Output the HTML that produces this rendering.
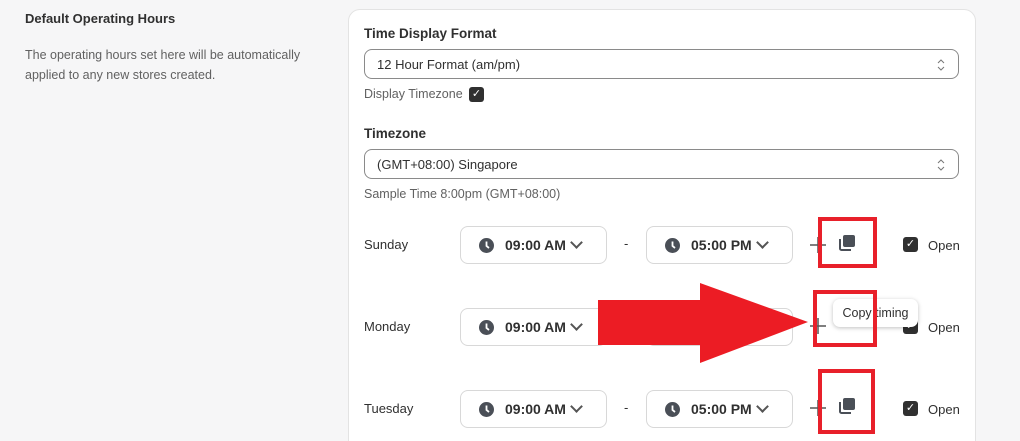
<!DOCTYPE html>
<html style="height:441px;overflow:hidden"><head><style>
body{margin:0;width:1020px;height:441px;background:#f6f6f7;font-family:"Liberation Sans",sans-serif;position:relative;overflow:hidden;color:#303030}
.a{position:absolute}
.card{left:348px;top:9px;width:626px;height:450px;background:#fff;border:1px solid #e3e3e3;border-radius:12px}
.sel{border:1px solid #8a8a8a;border-radius:8px;height:30px;left:364px;width:595px;font-size:13px;line-height:30px;padding-left:12px;box-sizing:border-box;color:#303030}
.tb{border:1px solid #d8d8d8;border-radius:8px;height:38px;width:147px;box-sizing:border-box;font-size:14px;font-weight:bold;line-height:36px;color:#303030}
.tb svg{position:absolute;left:18px;top:11px}
.tb .t{position:absolute;left:44px}
.tb .v{position:absolute;right:25px;top:11px;width:7px;height:7px;border-right:2px solid #555;border-bottom:2px solid #555;transform:rotate(45deg)}
.day{font-size:13px;left:364px}
.cb{width:15px;height:15px;background:#303030;border-radius:3px;color:#fff;font-size:11px;line-height:15px;text-align:center}
.red{border:4px solid #e8202a;box-sizing:border-box}
</style></head><body>
<div class="a" style="left:25px;top:11px;font-size:13px;font-weight:bold">Default Operating Hours</div>
<div class="a" style="left:25px;top:45px;font-size:12.5px;line-height:20px;color:#616161;width:300px">The operating hours set here will be automatically applied to any new stores created.</div>
<div class="a card"></div>
<div class="a" style="left:364px;top:26px;font-size:13.5px;font-weight:bold">Time Display Format</div>
<div class="a sel" style="top:49px">12 Hour Format (am/pm)<svg class="a" style="right:12px;top:8px" width="10" height="14"><path d="M2 5l3-3 3 3M2 9l3 3 3-3" stroke="#777" fill="none"/></svg></div>
<div class="a" style="left:364px;top:87px;font-size:12.5px;color:#616161">Display Timezone</div>
<div class="a cb" style="left:469px;top:87px">✓</div>
<div class="a" style="left:364px;top:126px;font-size:13.5px;font-weight:bold">Timezone</div>
<div class="a sel" style="top:149px">(GMT+08:00) Singapore<svg class="a" style="right:12px;top:8px" width="10" height="14"><path d="M2 5l3-3 3 3M2 9l3 3 3-3" stroke="#777" fill="none"/></svg></div>
<div class="a" style="left:364px;top:187px;font-size:12.5px;color:#616161">Sample Time 8:00pm (GMT+08:00)</div>

<!-- rows -->
<div class="a day" style="top:237px">Sunday</div>
<div class="a tb" style="left:460px;top:226px"><svg width="15" height="15"><circle cx="7.5" cy="7.5" r="7.5" fill="#4a4f57"/><path d="M7.5 3.5v4.5l2.5 2" stroke="#fff" stroke-width="1.8" fill="none"/></svg><span class="t">09:00 AM</span><span class="v"></span></div>
<div class="a" style="left:624px;top:236px;font-size:13px">-</div>
<div class="a tb" style="left:646px;top:226px"><svg width="15" height="15"><circle cx="7.5" cy="7.5" r="7.5" fill="#4a4f57"/><path d="M7.5 3.5v4.5l2.5 2" stroke="#fff" stroke-width="1.8" fill="none"/></svg><span class="t">05:00 PM</span><span class="v"></span></div>
<svg class="a" style="left:810px;top:236px" width="18" height="18"><path d="M0 9h16M8 1v16" stroke="#555" stroke-width="1.5"/></svg>
<svg class="a" style="left:838px;top:234px" width="18" height="18"><rect x="5" y="1" width="12" height="12" rx="2" fill="#4a4f57"/><path d="M2 5v9.5a1.5 1.5 0 0 0 1.5 1.5h9.5" stroke="#4a4f57" stroke-width="2" fill="none"/></svg>
<div class="a cb" style="left:903px;top:237px">✓</div>
<div class="a" style="left:928px;top:238px;font-size:13px">Open</div>

<div class="a day" style="top:319px">Monday</div>
<div class="a tb" style="left:460px;top:308px"><svg width="15" height="15"><circle cx="7.5" cy="7.5" r="7.5" fill="#4a4f57"/><path d="M7.5 3.5v4.5l2.5 2" stroke="#fff" stroke-width="1.8" fill="none"/></svg><span class="t">09:00 AM</span><span class="v"></span></div>
<div class="a tb" style="left:646px;top:308px"></div>
<svg class="a" style="left:810px;top:317px" width="18" height="18"><path d="M0 9h16M8 1v16" stroke="#555" stroke-width="1.5"/></svg>
<div class="a cb" style="left:903px;top:319px">✓</div>
<div class="a" style="left:928px;top:320px;font-size:13px">Open</div>

<div class="a day" style="top:401px">Tuesday</div>
<div class="a tb" style="left:460px;top:390px"><svg width="15" height="15"><circle cx="7.5" cy="7.5" r="7.5" fill="#4a4f57"/><path d="M7.5 3.5v4.5l2.5 2" stroke="#fff" stroke-width="1.8" fill="none"/></svg><span class="t">09:00 AM</span><span class="v"></span></div>
<div class="a" style="left:624px;top:400px;font-size:13px">-</div>
<div class="a tb" style="left:646px;top:390px"><svg width="15" height="15"><circle cx="7.5" cy="7.5" r="7.5" fill="#4a4f57"/><path d="M7.5 3.5v4.5l2.5 2" stroke="#fff" stroke-width="1.8" fill="none"/></svg><span class="t">05:00 PM</span><span class="v"></span></div>
<svg class="a" style="left:810px;top:399px" width="18" height="18"><path d="M0 9h16M8 1v16" stroke="#555" stroke-width="1.5"/></svg>
<svg class="a" style="left:838px;top:397px" width="18" height="18"><rect x="5" y="1" width="12" height="12" rx="2" fill="#4a4f57"/><path d="M2 5v9.5a1.5 1.5 0 0 0 1.5 1.5h9.5" stroke="#4a4f57" stroke-width="2" fill="none"/></svg>
<div class="a cb" style="left:903px;top:401px">✓</div>
<div class="a" style="left:928px;top:402px;font-size:13px">Open</div>

<!-- arrow -->
<svg class="a" style="left:0;top:0" width="1020" height="441"><rect x="598" y="300" width="104" height="45" fill="#ec1c24"/><polygon points="700,283 808,322 700,363" fill="#ec1c24"/></svg>
<div class="a" style="left:833px;top:299px;width:85px;height:28px;background:#fff;border-radius:7px;box-shadow:0 1px 4px rgba(0,0,0,.25);font-size:12.5px;line-height:28px;text-align:center">Copy timing</div>
<div class="a red" style="left:818px;top:217px;width:59px;height:51px"></div>
<div class="a red" style="left:813px;top:290px;width:64px;height:57px"></div>
<div class="a red" style="left:818px;top:369px;width:57px;height:65px"></div>
</body></html>
